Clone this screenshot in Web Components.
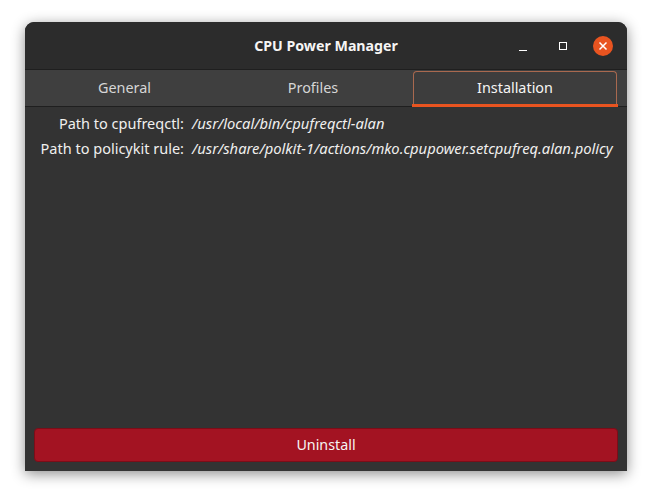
<!DOCTYPE html>
<html>
<head>
<meta charset="utf-8">
<title>CPU Power Manager</title>
<style>
  html, body { margin: 0; height: 100%; background: #fff; }
  body { padding: 22px 25px 28px; box-sizing: border-box; font-family: "Noto Sans", "Open Sans", sans-serif; }
</style>
</head>
<body>
<cpm-window title-text="CPU Power Manager">
  <cpm-tab>General</cpm-tab>
  <cpm-tab>Profiles</cpm-tab>
  <cpm-tab selected>Installation</cpm-tab>
  <cpm-row slot="rows" label="Path to cpufreqctl:" value="/usr/local/bin/cpufreqctl-alan"></cpm-row>
  <cpm-row slot="rows" label="Path to policykit rule:" value="/usr/share/polkit-1/actions/mko.cpupower.setcpufreq.alan.policy"></cpm-row>
  <cpm-button slot="action">Uninstall</cpm-button>
</cpm-window>
<script>
  class CpmWindow extends HTMLElement {
    constructor() {
      super();
      this.attachShadow({ mode: "open" });
    }
    connectedCallback() {
      var title = this.getAttribute("title-text") || "";
      this.shadowRoot.innerHTML =
        '<style>' +
        ':host{display:flex;flex-direction:column;width:602px;height:449px;background:#333;color:#f6f5f4;border-radius:9px 9px 0 0;box-shadow:0 3px 14px rgba(0,0,0,.45);overflow:hidden}' +
        '.head{flex:none;height:48px;box-sizing:border-box;background:#2c2c2c;border-bottom:1px solid #1f1f1f;display:grid;grid-template-columns:1fr auto 1fr;align-items:center}' +
        '.title{grid-column:2;font-size:14.2px;font-weight:700;color:#f6f5f4}' +
        '.ctl{grid-column:3;justify-self:end;display:flex;align-items:center;gap:20px;padding-right:14px}' +
        '.ctl svg{display:block}' +
        '.tabs{flex:none;height:37px;box-sizing:border-box;background:#3f3f3f;border-bottom:1px solid #1f1f1f;display:grid;grid-template-columns:199px 178px 1fr;padding-top:1px}' +
        '.rows{flex:1;display:flex;flex-direction:column;gap:6px;padding:7px 14px 0 0}' +
        '.action{flex:none;padding:0 9px 9px}' +
        '</style>' +
        '<div class="head"><span class="title"></span><div class="ctl">' +
        '<svg width="20" height="20" viewBox="0 0 20 20"><path d="M6 14.5h8" stroke="#fff" stroke-width="1"/></svg>' +
        '<svg width="20" height="20" viewBox="0 0 20 20"><rect x="6.5" y="6.5" width="7" height="7" fill="none" stroke="#fff" stroke-width="1"/></svg>' +
        '<svg width="20" height="20" viewBox="0 0 20 20"><circle cx="10" cy="10" r="10" fill="#e95420"/><path d="M6.5 6.5l7 7M13.5 6.5l-7 7" stroke="#fff" stroke-width="1.5"/></svg>' +
        '</div></div>' +
        '<div class="tabs"><slot></slot></div>' +
        '<div class="rows"><slot name="rows"></slot></div>' +
        '<div class="action"><slot name="action"></slot></div>';
      this.shadowRoot.querySelector(".title").textContent = title;
    }
  }

  class CpmTab extends HTMLElement {
    constructor() {
      super();
      this.attachShadow({ mode: "open" });
      this.shadowRoot.innerHTML =
        '<style>' +
        ':host{display:flex;position:relative;align-items:center;justify-content:center;box-sizing:border-box;font-size:14.4px;color:#d6d6d6;height:35px;padding-bottom:2px}' +
        ':host([selected]){color:#f6f5f4;margin-left:11px;margin-right:10px;padding-bottom:4px;border:1px solid #a9694f;border-bottom:none;border-radius:4px 4px 0 0;background:#3d3d3d}' +
        ':host([selected])::after{content:"";position:absolute;left:-2px;right:-2px;bottom:-1px;height:3px;background:#e95420}' +
        '</style><slot></slot>';
    }
  }

  class CpmRow extends HTMLElement {
    constructor() {
      super();
      this.attachShadow({ mode: "open" });
    }
    connectedCallback() {
      this.shadowRoot.innerHTML =
        '<style>' +
        ':host{display:grid;grid-template-columns:159px 1fr;column-gap:8px;font-size:14.5px;line-height:19px;color:#f0efee;white-space:nowrap}' +
        '.l{text-align:right}' +
        '.v{font-style:italic;font-size:14.74px}' +
        '</style><span class="l"></span><span class="v"></span>';
      this.shadowRoot.querySelector(".l").textContent = this.getAttribute("label");
      this.shadowRoot.querySelector(".v").textContent = this.getAttribute("value");
    }
  }

  class CpmButton extends HTMLElement {
    constructor() {
      super();
      this.attachShadow({ mode: "open" });
      this.shadowRoot.innerHTML =
        '<style>' +
        ':host{display:flex;align-items:center;justify-content:center;box-sizing:border-box;height:34px;padding-bottom:2px;background:#a31322;border:1px solid #7c0d18;border-radius:4px;color:#f6f5f4;font-size:14.3px}' +
        '</style><slot></slot>';
    }
  }

  customElements.define("cpm-window", CpmWindow);
  customElements.define("cpm-tab", CpmTab);
  customElements.define("cpm-row", CpmRow);
  customElements.define("cpm-button", CpmButton);
</script>
</body>
</html>
